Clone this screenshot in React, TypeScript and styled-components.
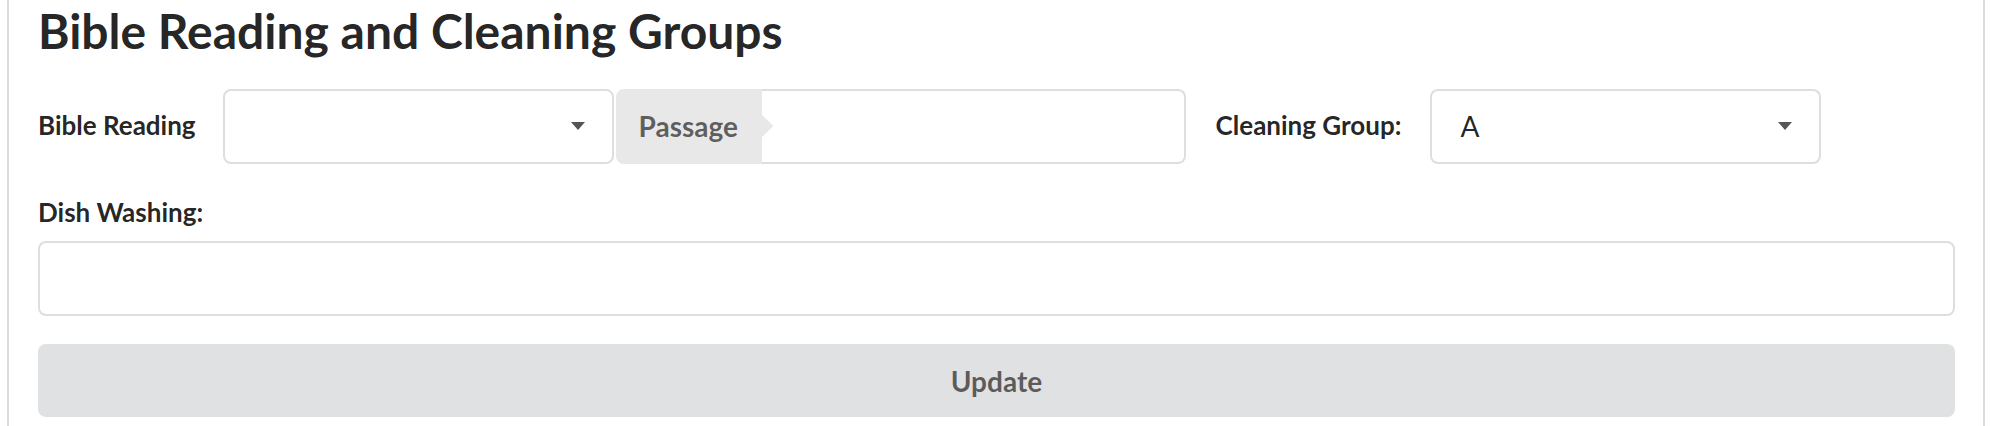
import React from "react";
import styled, { createGlobalStyle } from "styled-components";

const GlobalStyle = createGlobalStyle`
  html, body {
    margin: 0;
    padding: 0;
    background: #ffffff;
    font-family: Lato, "Liberation Sans", Arial, sans-serif;
    color: rgba(0, 0, 0, 0.87);
  }
  * {
    box-sizing: border-box;
  }
`;

const Page = styled.div`
  padding: 0 7px 0 7px;
  height: 426px;
  overflow: hidden;
`;

const Segment = styled.section`
  border-left: 2px solid #dcdcdc;
  border-right: 2px solid #dcdcdc;
  padding: 0 28px 20px 29px;
  display: flex;
  flex-direction: column;
`;

const Heading = styled.h2`
  margin: 0;
  font-size: 48px;
  font-weight: 700;
  line-height: 1.2857;
  color: rgba(0, 0, 0, 0.87);
`;

const Row = styled.div`
  display: flex;
  align-items: center;
  margin-top: 27px;
  height: 75px;
`;

const FieldLabel = styled.label<{ $left?: number; $right?: number }>`
  font-size: 26px;
  font-weight: 700;
  line-height: 1.2857;
  color: rgba(0, 0, 0, 0.87);
  margin-left: ${({ $left }) => $left ?? 0}px;
  margin-right: ${({ $right }) => $right ?? 0}px;
  white-space: nowrap;
`;

const Dropdown = styled.div`
  width: 391px;
  height: 75px;
  border: 2px solid #dedede;
  border-radius: 8px;
  padding: 0 27px 0 28px;
  display: flex;
  align-items: center;
  justify-content: space-between;
  font-size: 28px;
  color: rgba(0, 0, 0, 0.87);
`;

const Caret = styled.svg`
  width: 14px;
  height: 8px;
  flex: none;
  margin-left: auto;
`;

const LabeledInput = styled.div`
  display: flex;
  width: 570px;
  height: 75px;
  margin-left: 2px;
`;

const InputLabel = styled.div`
  position: relative;
  display: flex;
  align-items: center;
  padding: 0 23px;
  width: 146px;
  background: #e8e8e8;
  border-radius: 8px 0 0 8px;
  font-size: 28px;
  font-weight: 700;
  color: rgba(0, 0, 0, 0.6);

  &::after {
    content: "";
    position: absolute;
    top: 50%;
    left: 100%;
    width: 16px;
    height: 16px;
    background: #e8e8e8;
    transform: translate(-50%, -50%) rotate(45deg);
  }
`;

const InputBox = styled.div`
  flex: 1;
  border: 2px solid #dedede;
  border-left: none;
  border-radius: 0 8px 8px 0;
`;

const BlockLabel = styled(FieldLabel)`
  display: block;
  margin-top: 32px;
`;

const WideInput = styled.div`
  height: 75px;
  margin-top: 12px;
  border: 2px solid #dedede;
  border-radius: 8px;
`;

const Button = styled.button`
  margin-top: 28px;
  height: 73px;
  border: none;
  border-radius: 8px;
  background: #e0e1e2;
  color: rgba(0, 0, 0, 0.6);
  font-family: inherit;
  font-size: 28px;
  font-weight: 700;
  cursor: pointer;
`;

const DropCaret: React.FC = () => (
  <Caret viewBox="0 0 14 8">
    <path d="M0 0 L14 0 L7 8 Z" fill="#555555" />
  </Caret>
);

const App: React.FC = () => {
  return (
    <Page>
      <GlobalStyle />
      <Segment>
        <Heading>Bible Reading and Cleaning Groups</Heading>
        <Row>
          <FieldLabel $right={27}>Bible Reading</FieldLabel>
          <Dropdown>
            <DropCaret />
          </Dropdown>
          <LabeledInput>
            <InputLabel>Passage</InputLabel>
            <InputBox />
          </LabeledInput>
          <FieldLabel $left={30} $right={29}>
            Cleaning Group:
          </FieldLabel>
          <Dropdown>
            <span>A</span>
            <DropCaret />
          </Dropdown>
        </Row>
        <BlockLabel>Dish Washing:</BlockLabel>
        <WideInput />
        <Button>Update</Button>
      </Segment>
    </Page>
  );
};

export default App;
